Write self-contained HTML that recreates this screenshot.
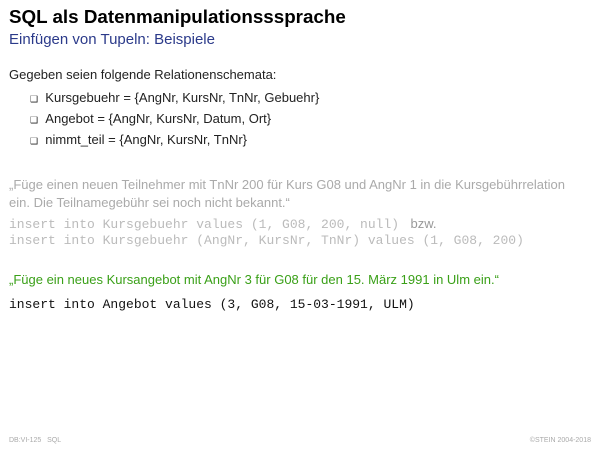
<!DOCTYPE html>
<html><head><meta charset="utf-8"><style>
body{margin:0;width:600px;height:450px;background:#fff;position:relative;font-family:"Liberation Sans",sans-serif;overflow:hidden}
.a{position:absolute;white-space:nowrap}
.m{font-family:"Liberation Mono",monospace;font-size:13px}
.g{color:#aaa}
</style></head><body>
<div class="a" style="left:9px;top:6px;font-size:18.8px;font-weight:bold;color:#000">SQL als Datenmanipulationsssprache</div>
<div class="a" style="left:9px;top:31px;font-size:15px;color:#2b3a8a">Einfügen von Tupeln: Beispiele</div>
<div class="a" style="left:9px;top:67px;font-size:13px;color:#222">Gegeben seien folgende Relationenschemata:</div>
<div class="a" style="left:30px;top:88px;font-size:13px;color:#222;line-height:19px">
<span style="font-size:9px">❑</span>&nbsp;&nbsp;Kursgebuehr = {AngNr, KursNr, TnNr, Gebuehr}<br>
<span style="font-size:9px">❑</span>&nbsp;&nbsp;Angebot = {AngNr, KursNr, Datum, Ort}<br>
<span style="font-size:9px">❑</span>&nbsp;&nbsp;nimmt_teil = {AngNr, KursNr, TnNr}</div>
<div class="a g" style="left:9px;top:176px;font-size:13px;line-height:17.5px">„Füge einen neuen Teilnehmer mit TnNr 200 für Kurs G08 und AngNr 1 in die Kursgebührrelation<br>ein. Die Teilnamegebühr sei noch nicht bekannt.“</div>
<div class="a g m" style="left:9px;top:216px;line-height:16px;color:#bbb">insert into Kursgebuehr values (1, G08, 200, null) <span style="font-family:'Liberation Sans',sans-serif;font-size:13px;color:#999">&nbsp;bzw.</span><br>insert into Kursgebuehr (AngNr, KursNr, TnNr) values (1, G08, 200)</div>
<div class="a" style="left:9px;top:272px;font-size:13px;color:#3aa018">„Füge ein neues Kursangebot mit AngNr 3 für G08 für den 15. März 1991 in Ulm ein.“</div>
<div class="a m" style="left:9px;top:297px;color:#111">insert into Angebot values (3, G08, 15-03-1991, ULM)</div>
<div class="a" style="left:9px;top:437px;font-size:7px;color:#aaa">DB:VI-125&nbsp;&nbsp;&nbsp;SQL</div>
<div class="a" style="right:9px;top:437px;font-size:7px;color:#aaa">©STEIN 2004-2018</div>
</body></html>
